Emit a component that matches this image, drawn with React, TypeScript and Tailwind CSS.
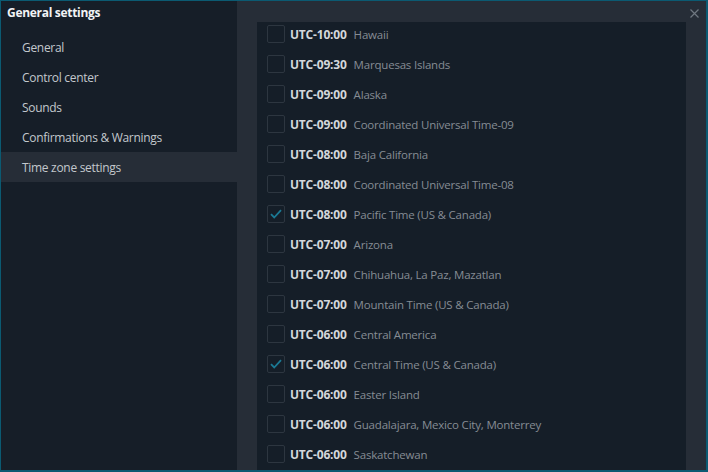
import React from "react";

const zones: [string, string, boolean][] = [
  ["UTC-10:00", "Hawaii", false],
  ["UTC-09:30", "Marquesas Islands", false],
  ["UTC-09:00", "Alaska", false],
  ["UTC-09:00", "Coordinated Universal Time-09", false],
  ["UTC-08:00", "Baja California", false],
  ["UTC-08:00", "Coordinated Universal Time-08", false],
  ["UTC-08:00", "Pacific Time (US & Canada)", true],
  ["UTC-07:00", "Arizona", false],
  ["UTC-07:00", "Chihuahua, La Paz, Mazatlan", false],
  ["UTC-07:00", "Mountain Time (US & Canada)", false],
  ["UTC-06:00", "Central America", false],
  ["UTC-06:00", "Central Time (US & Canada)", true],
  ["UTC-06:00", "Easter Island", false],
  ["UTC-06:00", "Guadalajara, Mexico City, Monterrey", false],
  ["UTC-06:00", "Saskatchewan", false],
];

const menu = ["General", "Control center", "Sounds", "Confirmations & Warnings", "Time zone settings"];

export default function App() {
  return (
    <div
      className="w-[708px] h-[472px] flex border-t border-l border-r-2 border-b-2 border-[#0b5a72] bg-[#262d37] overflow-hidden text-[12px]"
      style={{ fontFamily: '"Open Sans", "Noto Sans", sans-serif' }}
    >
      <div className="w-[236px] shrink-0 bg-[#161e28] flex flex-col">
        <div className="h-[23px] mb-[8px] pl-[6px] flex items-center text-[12px] font-bold text-[#f1f3f5] tracking-[-0.3px]">
          General settings
        </div>
        {menu.map((m, i) => (
          <div
            key={m}
            className={`h-[30px] flex items-center pl-[21px] pt-[2px] text-[#c3c8cd] tracking-[-0.3px] ${i === 4 ? "bg-[#262d37]" : ""}`}
          >
            {m}
          </div>
        ))}
      </div>
      <div className="flex-1 flex flex-col relative pl-[20px] pr-[20px]">
        <div className="absolute right-[7px] top-[8px]">
          <svg width="9" height="9" viewBox="0 0 9 9">
            <path d="M0.5 0.5L8.5 8.5M8.5 0.5L0.5 8.5" stroke="#6f7780" strokeWidth="1.2" />
          </svg>
        </div>
        <div className="h-[21px] shrink-0" />
        <div className="flex-1 bg-[#151e28] pt-[3px] pl-[10px] flex flex-col gap-[12px]">
          {zones.map(([utc, name, checked], i) => (
            <div key={i} className="h-[18px] flex items-center">
              <div className="w-[18px] h-[18px] rounded-[2px] border border-[#2d3640] flex items-center justify-center shrink-0">
                {checked && (
                  <svg width="12" height="10" viewBox="0 0 12 10">
                    <path d="M1 5.2L4.2 8.5L11 1.2" fill="none" stroke="#1b7a95" strokeWidth="1.8" />
                  </svg>
                )}
              </div>
              <div className="flex items-baseline pt-[2px]">
                <span className="ml-[5px] font-bold text-[#d3d7db] tracking-[-0.2px]">{utc}</span>
                <span className="ml-[7px] text-[11.5px] text-[#858c94] tracking-[-0.2px]">{name}</span>
              </div>
            </div>
          ))}
        </div>
      </div>
    </div>
  );
}
